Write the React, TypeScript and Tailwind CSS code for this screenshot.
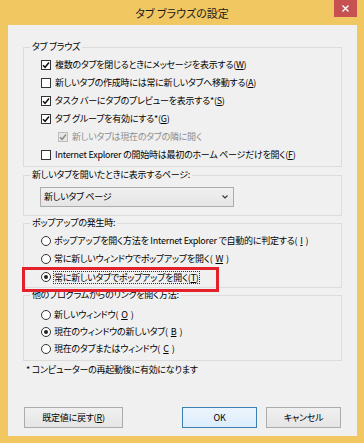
import React from 'react'

const Acc = ({ k }: { k: string }) => <span className="underline">{k}</span>

function Check({ checked, disabled }: { checked?: boolean; disabled?: boolean }) {
  return (
    <span
      className={
        'flex h-[10px] w-[10px] shrink-0 items-center justify-center border ' +
        (disabled ? 'border-[#bcbcbc] bg-[#e6e6e6]' : 'border-[#333] bg-white')
      }
    >
      {checked && (
        <svg width="8" height="8" viewBox="0 0 8 8">
          <path
            d="M1 4.2 L3.1 6.3 L7 1.6"
            fill="none"
            stroke={disabled ? '#8a8a8a' : '#111'}
            strokeWidth="1.5"
          />
        </svg>
      )}
    </span>
  )
}

function Radio({ checked }: { checked?: boolean }) {
  return (
    <span className="flex h-[10px] w-[10px] shrink-0 items-center justify-center rounded-full border border-[#333] bg-white">
      {checked && <span className="h-[4px] w-[4px] rounded-full bg-[#222]" />}
    </span>
  )
}

function CheckRow({ children, checked, disabled, indent }: { children: React.ReactNode; checked?: boolean; disabled?: boolean; indent?: boolean }) {
  return (
    <div className={'flex h-[18px] items-center gap-[4px] ' + (indent ? 'pl-[34px]' : 'pl-[17px]')}>
      <Check checked={checked} disabled={disabled} />
      <span className={disabled ? 'text-[#8d8d8d]' : ''}>{children}</span>
    </div>
  )
}

function RadioRow({ children, checked, h17 }: { children: React.ReactNode; checked?: boolean; h17?: boolean }) {
  return (
    <div className={'flex items-center gap-[3px] pl-[17px] ' + (h17 ? 'h-[17px]' : 'h-[18px]')}>
      <Radio checked={checked} />
      {children}
    </div>
  )
}

const Legend = ({ children }: { children: React.ReactNode }) => (
  <legend className="ml-[6px] px-[2px] leading-[14px]">{children}</legend>
)

export default function App() {
  return (
    <div className="flex h-[443px] w-[364px] flex-col bg-[#f1c762] font-['Noto_Sans_CJK_JP','Noto_Sans',sans-serif] text-[9px] tracking-[-0.25px] text-black [font-feature-settings:'palt']">
      {/* title bar */}
      <div className="relative flex h-[25px] shrink-0 items-center justify-center">
        <span className="pt-[1px] text-[11px] tracking-normal text-[#1a1a1a]">タブ ブラウズの設定</span>
        <div className="absolute right-[7px] top-0 flex h-[17px] w-[23px] items-center justify-center bg-[#c75050]">
          <svg width="7" height="7" viewBox="0 0 7 7">
            <path d="M0.5 0.5 L6.5 6.5 M6.5 0.5 L0.5 6.5" stroke="#fff" strokeWidth="1.4" />
          </svg>
        </div>
      </div>

      {/* client area */}
      <div className="relative mx-[7px] mb-[7px] ml-[8px] flex flex-1 flex-col bg-[#f0f0f0] px-[15px] pt-[15px]">
        <fieldset className="border border-[#dcdcdc] pb-[2px]">
          <Legend>タブ ブラウズ</Legend>
          <div className="mt-[2px]">
            <CheckRow checked>複数のタブを閉じるときにメッセージを表示する(<Acc k="W" />)</CheckRow>
            <CheckRow>新しいタブの作成時には常に新しいタブへ移動する(<Acc k="A" />)</CheckRow>
            <CheckRow checked>タスク バーにタブのプレビューを表示する*(<Acc k="S" />)</CheckRow>
            <CheckRow checked>タブ グループを有効にする*(<Acc k="G" />)</CheckRow>
            <CheckRow checked disabled indent>新しいタブは現在のタブの隣に開く</CheckRow>
            <CheckRow>Internet Explorer の開始時は最初のホーム ページだけを開く(<Acc k="F" />)</CheckRow>
          </div>
        </fieldset>

        <fieldset className="mt-[1px] border border-[#dcdcdc] pb-[8px]">
          <Legend>新しいタブを開いたときに表示するページ:</Legend>
          <div className="ml-[16px] mt-[5px] flex h-[20px] w-[194px] items-center justify-between border border-[#acacac] bg-gradient-to-b from-[#f0f0f0] to-[#e5e5e5] pl-[3px] pr-[5px]">
            <span>新しいタブ ページ</span>
            <svg width="6" height="4" viewBox="0 0 6 4">
              <path d="M0.5 0.5 L3 3 L5.5 0.5" fill="none" stroke="#333" strokeWidth="1.1" />
            </svg>
          </div>
        </fieldset>

        <fieldset className="border border-[#dcdcdc] pb-[1px]">
          <Legend>ポップアップの発生時:</Legend>
          <div className="mt-[2px]">
            <RadioRow>ポップアップを開く方法を Internet Explorer で自動的に判定する(<Acc k="I" />)</RadioRow>
            <RadioRow>常に新しいウィンドウでポップアップを開く(<Acc k="W" />)</RadioRow>
            <RadioRow checked>
              <span className="outline-1 outline-dotted outline-[#333] leading-[11px]">常に新しいタブでポップアップを開く(<Acc k="T" />)</span>
            </RadioRow>
          </div>
        </fieldset>

        <fieldset className="border border-[#dcdcdc] pb-[3px]">
          <Legend>他のプログラムからのリンクを開く方法:</Legend>
          <div className="mt-[4px]">
            <RadioRow h17>新しいウィンドウ(<Acc k="O" />)</RadioRow>
            <RadioRow h17 checked>現在のウィンドウの新しいタブ(<Acc k="B" />)</RadioRow>
            <RadioRow h17>現在のタブまたはウィンドウ(<Acc k="C" />)</RadioRow>
          </div>
        </fieldset>

        <p className="mt-[1px] pl-[3px] leading-[16px]">* コンピューターの再起動後に有効になります</p>

        <div className="mt-auto mb-[8px] flex pl-[1px]">
          <button className="h-[21px] w-[99px] border border-[#acacac] bg-gradient-to-b from-[#f0f0f0] to-[#e5e5e5]">
            既定値に戻す(<Acc k="R" />)
          </button>
          <button className="ml-auto h-[21px] w-[75px] border border-[#3c7fb1] bg-gradient-to-b from-[#ecf4fc] to-[#dcecfc]">
            OK
          </button>
          <button className="ml-[9px] mr-[1px] h-[21px] w-[75px] border border-[#acacac] bg-gradient-to-b from-[#f0f0f0] to-[#e5e5e5]">
            キャンセル
          </button>
        </div>

        {/* red highlight */}
        <div className="pointer-events-none absolute left-[14px] top-[242px] h-[25px] w-[197px] border-[3px] border-[#e4202a]" />
      </div>
    </div>
  )
}
